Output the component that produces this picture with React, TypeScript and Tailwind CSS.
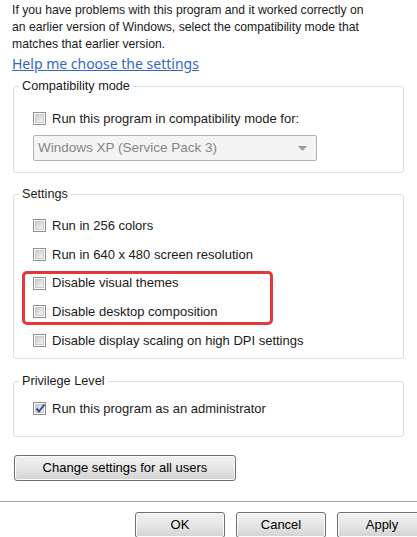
import React from 'react';

function CheckBox({ checked = false }: { checked?: boolean }) {
  return (
    <span className="relative flex h-[13px] w-[13px] flex-shrink-0 items-center justify-center border border-[#8e8f8f] bg-white">
      <span className="h-[9px] w-[9px] border border-[#c9c9c9] bg-gradient-to-br from-[#cbcbcb] to-[#f6f6f6]" />
      {checked && (
        <svg className="absolute left-[1px] top-[0px]" width="11" height="11" viewBox="0 0 11 11">
          <path d="M1.5 5.5 L4 8.5 L9.5 1.5" fill="none" stroke="#2a4d9b" strokeWidth="2" />
        </svg>
      )}
    </span>
  );
}

function CheckRow({ label, checked }: { label: string; checked?: boolean }) {
  return (
    <div className="flex h-[17px] items-center gap-[6px] text-[13px]">
      <CheckBox checked={checked} />
      <span>{label}</span>
    </div>
  );
}

function Group({ title, className, children }: { title: string; className: string; children: React.ReactNode }) {
  return (
    <fieldset className={`mx-[13px] rounded-[3px] border border-[#d5dfe5] pl-[19px] ${className}`}>
      <legend className="-ml-[14px] px-[3px] text-[12.7px] leading-[16px]">{title}</legend>
      {children}
    </fieldset>
  );
}

function WinButton({ label, className }: { label: string; className: string }) {
  return (
    <button className={`h-[26px] rounded-[3px] border border-[#707070] bg-gradient-to-b from-[#f2f2f2] via-[#e6e6e6] to-[#d3d3d3] text-[13px] text-black shadow-[inset_0_0_0_1px_#fbfbfb] ${className}`}>
      {label}
    </button>
  );
}

export default function App() {
  return (
    <div
      className="flex h-[537px] w-[417px] flex-col overflow-hidden bg-white text-[12.2px] text-[#1a1a1a]"
      style={{ fontFamily: '"Liberation Sans", Arial, sans-serif' }}
    >
      {/* Intro text */}
      <div className="px-[12px] pt-[2px] leading-[17px]">
        <p>If you have problems with this program and it worked correctly on</p>
        <p>an earlier version of Windows, select the compatibility mode that</p>
        <p>matches that earlier version.</p>
      </div>
      <a
        className="ml-[12px] mt-[2px] self-start text-[14px] leading-[17px] text-[#3366cc] underline"
        style={{ fontFamily: '"Noto Sans", "Open Sans", sans-serif' }}
      >
        Help me choose the settings
      </a>

      {/* Compatibility mode */}
      <Group title="Compatibility mode" className="mt-[6px] pb-[11px]">
        <div className="pt-[16px]">
          <CheckRow label="Run this program in compatibility mode for:" />
        </div>
        <div className="mt-[8px] flex h-[26px] w-[284px] items-center justify-between rounded-[2px] border border-[#b0b4b8] bg-[#f4f4f4] pl-[4px] pr-[9px] text-[13.5px] text-[#858585]">
          <span>Windows XP (Service Pack 3)</span>
          <svg width="9" height="5" viewBox="0 0 9 5">
            <path d="M0 0 H9 L4.5 5 Z" fill="#9a9a9a" />
          </svg>
        </div>
      </Group>

      {/* Settings */}
      <Group title="Settings" className="mt-[13px] pb-[9px]">
        <div className="flex flex-col gap-[11.75px] pt-[15px]">
          <CheckRow label="Run in 256 colors" />
          <CheckRow label="Run in 640 x 480 screen resolution" />
          <div className="relative flex flex-col gap-[11.75px]">
            <CheckRow label="Disable visual themes" />
            <CheckRow label="Disable desktop composition" />
            <div className="pointer-events-none absolute bottom-[-5px] left-[-11px] top-[-4px] w-[251px] rounded-[5px] border-[3px] border-[#e8353b]" />
          </div>
          <CheckRow label="Disable display scaling on high DPI settings" />
        </div>
      </Group>

      {/* Privilege Level */}
      <Group title="Privilege Level" className="mt-[14px] pb-[19px]">
        <div className="pt-[11px]">
          <CheckRow label="Run this program as an administrator" checked />
        </div>
      </Group>

      <div className="mt-[18px] px-[14px]">
        <WinButton label="Change settings for all users" className="h-[25px] w-[222px]" />
      </div>

      {/* Footer */}
      <div className="mt-[20px] flex-1 border-t border-[#a0a0a0] bg-white">
        <div className="flex gap-[11px] pl-[135px] pt-[10px]">
          <WinButton label="OK" className="w-[90px] flex-shrink-0" />
          <WinButton label="Cancel" className="w-[90px] flex-shrink-0" />
          <WinButton label="Apply" className="w-[90px] flex-shrink-0" />
        </div>
      </div>
    </div>
  );
}
